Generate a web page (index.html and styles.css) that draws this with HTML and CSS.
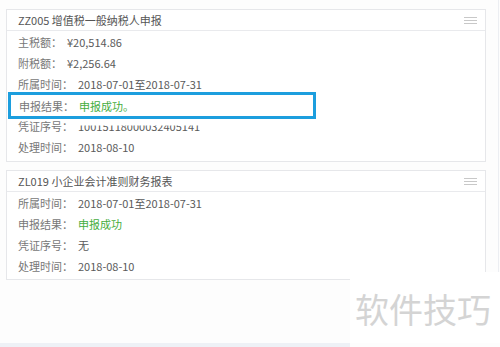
FILE: index.html
```html
<!DOCTYPE html>
<html lang="zh">
<head>
<meta charset="utf-8">
<link rel="stylesheet" href="styles.css">
</head>
<body>
<div class="page">
  <div class="list">
    <section class="card">
      <header class="card-head">
        <span class="title">ZZ005 增值税一般纳税人申报</span>
        <span class="menu"><i></i><i></i><i></i></span>
      </header>
      <div class="card-body">
        <div class="row"><span class="label">主税额：</span><span class="value">¥20,514.86</span></div>
        <div class="row"><span class="label">附税额：</span><span class="value">¥2,256.64</span></div>
        <div class="row"><span class="label">所属时间：</span><span class="value">2018-07-01至2018-07-31</span></div>
        <div class="row"><span class="label">申报结果：</span><span class="value ok">申报成功。</span></div>
        <div class="row"><span class="label">凭证序号：</span><span class="value cut">10015118000032405141</span></div>
        <div class="row"><span class="label">处理时间：</span><span class="value">2018-08-10</span></div>
      </div>
      <div class="highlight"><span class="label">申报结果：</span><span class="value ok">申报成功。</span></div>
    </section>
    <section class="card">
      <header class="card-head">
        <span class="title">ZL019 小企业会计准则财务报表</span>
        <span class="menu"><i></i><i></i><i></i></span>
      </header>
      <div class="card-body">
        <div class="row"><span class="label">所属时间：</span><span class="value">2018-07-01至2018-07-31</span></div>
        <div class="row"><span class="label">申报结果：</span><span class="value ok">申报成功</span></div>
        <div class="row"><span class="label">凭证序号：</span><span class="value">无</span></div>
        <div class="row"><span class="label">处理时间：</span><span class="value">2018-08-10</span></div>
      </div>
    </section>
  </div>
  <div class="strip"></div>
  <div class="watermark">软件技巧</div>
</div>
</body>
</html>
```
FILE: styles.css
```css
* { box-sizing: border-box; }
html, body { margin: 0; padding: 0; }
body {
  width: 500px;
  height: 347px;
  overflow: hidden;
  background: #fdfdfd;
  font-family: "Noto Sans CJK SC", "Noto Sans", sans-serif;
  font-size: 11px;
  color: #555;
}
.page {
  position: relative;
  width: 500px;
  height: 347px;
}
.list {
  width: 499px;
  height: 343px;
  border-right: 1px solid #eceef2;
  padding: 9px 0 0 6px;
  display: flex;
  flex-direction: column;
  gap: 8px;
}
.card {
  position: relative;
  width: 480px;
  background: #fff;
  border: 1px solid #e6e7ea;
}
.card-head {
  height: 21px;
  border-bottom: 1px solid #e9eaed;
  display: flex;
  align-items: center;
  justify-content: space-between;
  padding: 0 8px 0 11px;
}
.title { color: #555; line-height: 20px; }
.menu {
  display: flex;
  flex-direction: column;
  gap: 2px;
  width: 13px;
}
.menu i {
  display: block;
  height: 1px;
  background: #c8c8c8;
}
.card-body { padding: 1px 0 3px 11px; }
.card + .card .card-body { padding: 1px 0 2px 11px; }
.row {
  height: 21px;
  line-height: 21px;
  display: flex;
  white-space: nowrap;
}
.label { color: #777; margin-right: 5px; }
.value { color: #5a5a5a; }
.ok { color: #45ad40; }
.cut { clip-path: inset(45% 0 0 0); }
.highlight {
  position: absolute;
  left: 1px;
  top: 82px;
  width: 308px;
  height: 27px;
  border: 3px solid #1c9ede;
  background: #fff;
  padding-left: 8px;
  display: flex;
  align-items: center;
  line-height: 20px;
  white-space: nowrap;
}
.strip {
  position: absolute;
  left: 0;
  top: 343px;
  width: 350px;
  height: 4px;
  background: #eef1f6;
}
.watermark {
  position: absolute;
  left: 350px;
  top: 272px;
  width: 150px;
  height: 71px;
  background: #fff;
  color: #d4d4d4;
  font-size: 34px;
  line-height: 34px;
  padding: 20px 0 0 5px;
  white-space: nowrap;
}
```
